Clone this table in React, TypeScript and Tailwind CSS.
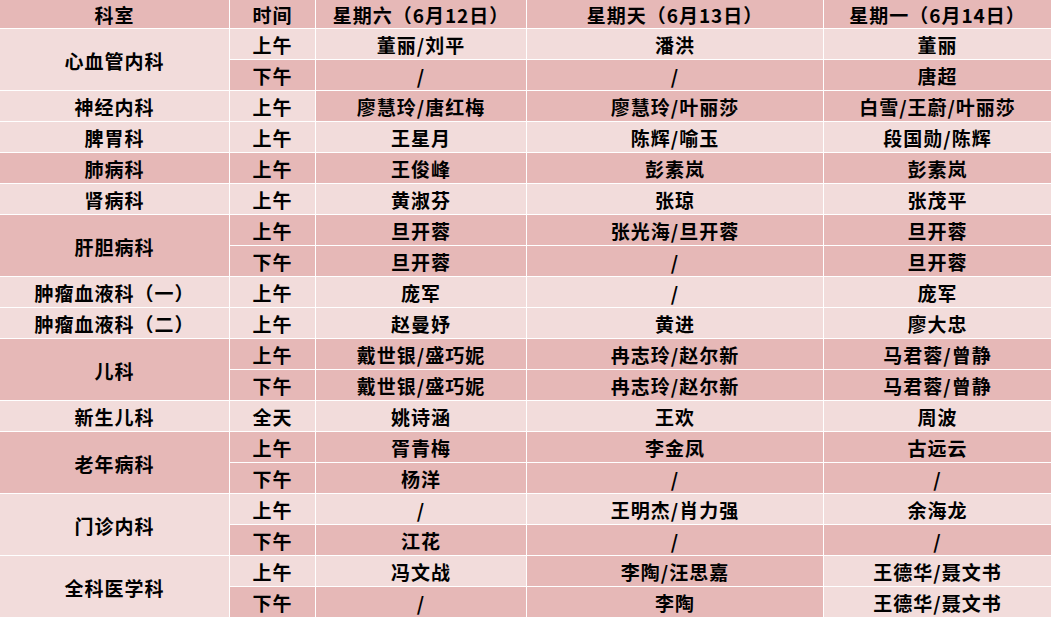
import React from 'react'

// D = 深色行, L = 浅色行
type Tone = 'D' | 'L'
type Slot = [string, Tone, string, Tone, string, Tone, string, Tone]

interface Dept {
  name: string
  tone: Tone
  slots: Slot[]
}

const depts: Dept[] = [
  { name: '心血管内科', tone: 'L', slots: [
    ['上午', 'L', '董丽/刘平', 'L', '潘洪', 'L', '董丽', 'L'],
    ['下午', 'D', '/', 'D', '/', 'D', '唐超', 'D'],
  ] },
  { name: '神经内科', tone: 'L', slots: [
    ['上午', 'L', '廖慧玲/唐红梅', 'D', '廖慧玲/叶丽莎', 'D', '白雪/王蔚/叶丽莎', 'D'],
  ] },
  { name: '脾胃科', tone: 'L', slots: [
    ['上午', 'L', '王星月', 'L', '陈辉/喻玉', 'L', '段国勋/陈辉', 'L'],
  ] },
  { name: '肺病科', tone: 'D', slots: [
    ['上午', 'D', '王俊峰', 'D', '彭素岚', 'D', '彭素岚', 'D'],
  ] },
  { name: '肾病科', tone: 'L', slots: [
    ['上午', 'L', '黄淑芬', 'L', '张琼', 'L', '张茂平', 'L'],
  ] },
  { name: '肝胆病科', tone: 'D', slots: [
    ['上午', 'D', '旦开蓉', 'D', '张光海/旦开蓉', 'D', '旦开蓉', 'D'],
    ['下午', 'D', '旦开蓉', 'D', '/', 'D', '旦开蓉', 'D'],
  ] },
  { name: '肿瘤血液科（一）', tone: 'L', slots: [
    ['上午', 'L', '庞军', 'L', '/', 'L', '庞军', 'L'],
  ] },
  { name: '肿瘤血液科（二）', tone: 'L', slots: [
    ['上午', 'L', '赵曼妤', 'L', '黄进', 'L', '廖大忠', 'L'],
  ] },
  { name: '儿科', tone: 'D', slots: [
    ['上午', 'D', '戴世银/盛巧妮', 'D', '冉志玲/赵尔新', 'D', '马君蓉/曾静', 'D'],
    ['下午', 'D', '戴世银/盛巧妮', 'D', '冉志玲/赵尔新', 'D', '马君蓉/曾静', 'D'],
  ] },
  { name: '新生儿科', tone: 'L', slots: [
    ['全天', 'L', '姚诗涵', 'L', '王欢', 'L', '周波', 'L'],
  ] },
  { name: '老年病科', tone: 'D', slots: [
    ['上午', 'D', '胥青梅', 'D', '李金凤', 'D', '古远云', 'D'],
    ['下午', 'D', '杨洋', 'D', '/', 'D', '/', 'D'],
  ] },
  { name: '门诊内科', tone: 'L', slots: [
    ['上午', 'L', '/', 'L', '王明杰/肖力强', 'L', '余海龙', 'L'],
    ['下午', 'D', '江花', 'D', '/', 'D', '/', 'D'],
  ] },
  { name: '全科医学科', tone: 'L', slots: [
    ['上午', 'L', '冯文战', 'L', '李陶/汪思嘉', 'D', '王德华/聂文书', 'L'],
    ['下午', 'D', '/', 'D', '李陶', 'D', '王德华/聂文书', 'L'],
  ] },
]

const bg = (t: Tone) => (t === 'D' ? 'bg-[#e6b8b7]' : 'bg-[#f2dcdb]')

function Cell({ tone, children, span }: { tone: Tone; children: React.ReactNode; span?: boolean }) {
  return (
    <div className={`${bg(tone)} ${span ? 'row-span-2' : ''} flex items-center justify-center whitespace-nowrap pt-px`}>
      {children}
    </div>
  )
}

export default function App() {
  return (
    <div
      className="w-[1051px] h-[618px] overflow-hidden bg-white text-black font-bold text-[19px] tracking-[1px] leading-none"
      style={{ fontFamily: '"Noto Sans CJK SC", "Noto Sans", sans-serif' }}
    >
      <div className="grid grid-cols-[229px_85px_210px_296px_227px] grid-rows-[28px] auto-rows-[30px] gap-px bg-white">
        <Cell tone="D">科室</Cell>
        <Cell tone="D">时间</Cell>
        <Cell tone="D">星期六（6月12日）</Cell>
        <Cell tone="D">星期天（6月13日）</Cell>
        <Cell tone="D">星期一（6月14日）</Cell>
        {depts.map(d => (
          <React.Fragment key={d.name}>
            <Cell tone={d.tone} span={d.slots.length > 1}>{d.name}</Cell>
            {d.slots.map(s => (
              <React.Fragment key={s[0]}>
                <Cell tone={s[1]}>{s[0]}</Cell>
                <Cell tone={s[3]}>{s[2]}</Cell>
                <Cell tone={s[5]}>{s[4]}</Cell>
                <Cell tone={s[7]}>{s[6]}</Cell>
              </React.Fragment>
            ))}
          </React.Fragment>
        ))}
      </div>
    </div>
  )
}
